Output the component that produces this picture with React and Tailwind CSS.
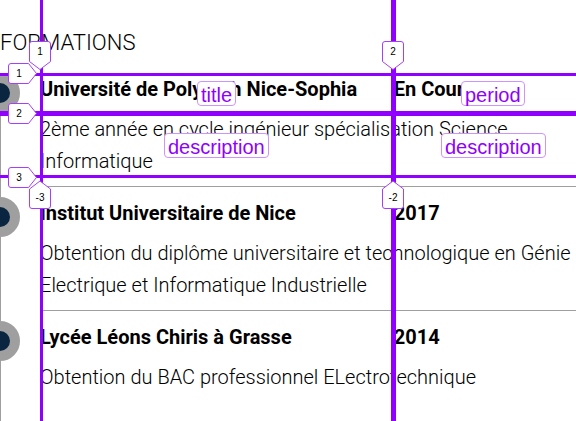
const entries = [
  {
    title: "Université de Polytech Nice-Sophia",
    period: "En Cours",
    description: "2ème année en cycle ingénieur spécialisation Science Informatique",
  },
  {
    title: "Institut Universitaire de Nice",
    period: "2017",
    description:
      "Obtention du diplôme universitaire et technologique en Génie Electrique et Informatique Industrielle",
  },
  {
    title: "Lycée Léons Chiris à Grasse",
    period: "2014",
    description: "Obtention du BAC professionnel ELectrotechnique",
  },
];

const tagShapes = {
  down: { w: 22, h: 30, d: "M3 0.500H19Q21.500 0.500 21.500 3V20.500L11 28.500L0.500 20.500V3Q0.500 0.500 3 0.500Z", box: "w-[22px] h-[30px] pb-2" },
  up: { w: 22, h: 30, d: "M3 28.500H19Q21.500 28.500 21.500 26V9L11 1L0.500 9V26Q0.500 28.500 3 28.500Z", box: "w-[22px] h-[30px] pt-1.5" },
  right: { w: 30, h: 22, d: "M3 0.500H20.500L28.500 10.500L20.500 20.500H3Q0.500 20.500 0.500 18V3Q0.500 0.500 3 0.500Z", box: "w-[30px] h-[22px] pr-2" },
};

function LineTag({ shape, place, children }) {
  const s = tagShapes[shape];
  return (
    <span className={`absolute flex items-center justify-center ${s.box} ${place}`}>
      <svg className="absolute inset-0" width={s.w} height={s.h} viewBox={`0 0 ${s.w} ${s.h}`} aria-hidden="true">
        <path d={s.d} fill="#fff" stroke="#a63ff8" strokeWidth="1" />
      </svg>
      <span className="relative text-[10px] leading-3 text-black">{children}</span>
    </span>
  );
}

function AreaLabel({ place, children }) {
  return (
    <span
      className={`absolute rounded-[4px] border border-[#cf94fb] bg-white px-[3px] pt-[3px] text-[20px] leading-5 text-[#9000ff] ${place}`}
    >
      {children}
    </span>
  );
}

function GridOverlay() {
  return (
    <div className="pointer-events-none absolute inset-0 overflow-hidden font-['Liberation_Sans',Arial,sans-serif]">
      <div className="absolute inset-x-0 top-[73px] h-[3px] bg-[#9000ff]" />
      <div className="absolute inset-x-0 top-[111px] h-[5px] bg-[#9000ff]" />
      <div className="absolute inset-x-0 top-[175px] h-[3px] bg-[#9000ff]" />
      <div className="absolute inset-y-0 left-[40px] w-[3px] bg-[#9000ff]" />
      <div className="absolute inset-y-0 left-[391px] w-[5px] bg-[#9000ff]" />

      <AreaLabel place="left-[197px] top-[81px]">title</AreaLabel>
      <AreaLabel place="left-[461px] top-[81px]">period</AreaLabel>
      <AreaLabel place="left-[164px] top-[133px]">description</AreaLabel>
      <AreaLabel place="left-[441px] top-[133px]">description</AreaLabel>

      <LineTag shape="down" place="left-[29px] top-[41px]">1</LineTag>
      <LineTag shape="down" place="left-[382px] top-[41px]">2</LineTag>
      <LineTag shape="right" place="left-[8px] top-[63px]">1</LineTag>
      <LineTag shape="right" place="left-[8px] top-[103px]">2</LineTag>
      <LineTag shape="right" place="left-[8px] top-[167px]">3</LineTag>
      <LineTag shape="up" place="left-[29px] top-[180px]">-3</LineTag>
      <LineTag shape="up" place="left-[382px] top-[180px]">-2</LineTag>
    </div>
  );
}

function Entry({ title, period, description, last }) {
  return (
    <li className="relative pl-[39px]">
      <span className="absolute -left-[21px] top-0 size-10 rounded-full border-10 border-[#9f9f9f] bg-[#0a2540]" />
      <div className="grid grid-cols-[66%_1fr] gap-y-2">
        <h3 className="whitespace-nowrap font-bold">{title}</h3>
        <p className="font-bold">{period}</p>
        <p className="col-span-2 font-light">{description}</p>
      </div>
      {!last && <hr className="mt-[9px] mb-[10px] border-[#9f9f9f]" />}
    </li>
  );
}

export default function App() {
  return (
    <main className="relative min-h-screen overflow-hidden bg-white font-[Roboto,sans-serif] text-black">
      <section className="flex min-h-screen flex-col">
        <h2 className="pt-[27px] pb-[14px] text-[22px] leading-8 font-light">FORMATIONS</h2>
        <ol className="flex-1 border-l border-[#9f9f9f] text-[20px] leading-8">
          {entries.map((entry, i) => (
            <Entry key={entry.title} {...entry} last={i === entries.length - 1} />
          ))}
        </ol>
      </section>
      <GridOverlay />
    </main>
  );
}
